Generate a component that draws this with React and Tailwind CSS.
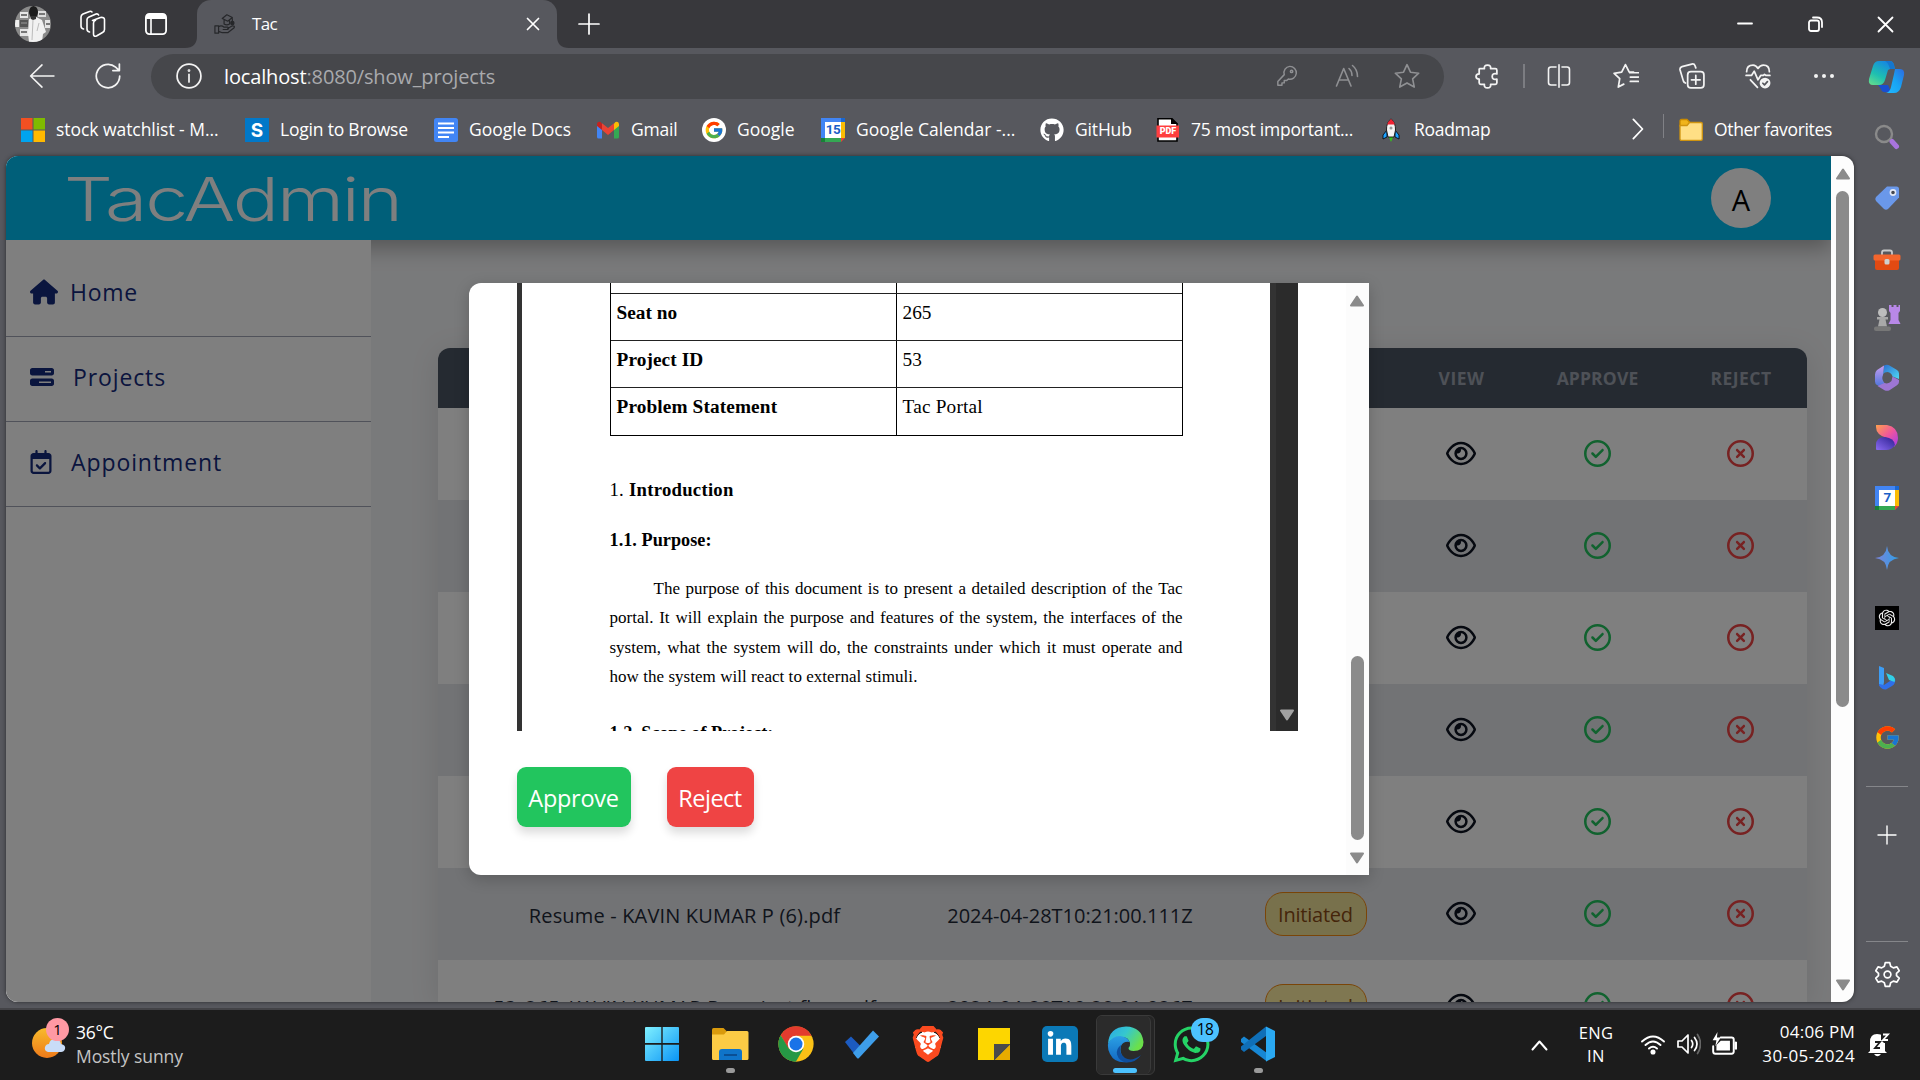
import React, { useLayoutEffect, useRef, useState } from "react";
import {
  FaHouse,
  FaBarsProgress,
  FaRegCalendarCheck,
  FaRegEye,
  FaRegCircleCheck,
  FaRegCircleXmark,
  FaGithub,
  FaWhatsapp,
  FaBrave,
  FaLinkedinIn,
} from "react-icons/fa6";
import { FcGoogle } from "react-icons/fc";
import { RiOpenaiFill } from "react-icons/ri";

/* Single-line text whose letter spacing is tuned to fill a given width. */
function Fit({ w, className = "", children }) {
  const ref = useRef(null);
  const [spacing, setSpacing] = useState(0);
  useLayoutEffect(() => {
    const el = ref.current;
    el.style.letterSpacing = "0px";
    const natural = el.offsetWidth;
    const count = el.textContent.length;
    setSpacing((w - natural) / count);
  }, [w]);
  return (
    <span
      ref={ref}
      className={"inline-block whitespace-pre " + className}
      style={{ letterSpacing: spacing + "px" }}
    >
      {children}
    </span>
  );
}

function Line({ size = 24, sw = 1.6, box = 24, className = "", children }) {
  return (
    <svg
      width={size}
      height={size}
      viewBox={`0 0 ${box} ${box}`}
      fill="none"
      stroke="currentColor"
      strokeWidth={sw}
      strokeLinecap="round"
      strokeLinejoin="round"
      className={"shrink-0 " + className}
    >
      {children}
    </svg>
  );
}

function Cell({ className = "", children }) {
  return <div className={"flex shrink-0 items-center justify-center " + className}>{children}</div>;
}

function Triangle({ down, className = "" }) {
  return (
    <svg width="16" height="12" viewBox="0 0 16 12" className={"shrink-0 " + className}>
      <path
        d={down ? "M2 1.5h12L8 10.5z" : "M2 10.5h12L8 1.5z"}
        fill="currentColor"
        stroke="currentColor"
        strokeWidth="2"
        strokeLinejoin="round"
      />
    </svg>
  );
}

/* ---------- Browser chrome ---------- */

function ProfilePhoto() {
  return (
    <svg width="36" height="36" viewBox="0 0 36 36">
      <clipPath id="photo">
        <circle cx="18" cy="18" r="18" />
      </clipPath>
      <g clipPath="url(#photo)">
        <rect width="36" height="36" fill="#8a8a8a" />
        <rect x="5" y="6" width="8" height="6" fill="#e8e8e8" />
        <rect x="5" y="14" width="8" height="7" fill="#555" />
        <rect x="5" y="23" width="9" height="7" fill="#e4e4e4" />
        <rect x="0" y="14" width="4" height="7" fill="#eee" />
        <rect x="23" y="5" width="8" height="6" fill="#ddd" />
        <rect x="30" y="14" width="5" height="8" fill="#e5e5e5" />
        <path d="M6 9h6M6 17h6M6 26h6M24 8h6M31 18h4" stroke="#777" strokeWidth="2" />
        <path d="M14 13l7-2 6 3 4 12-3 2-1 8H14l-1-9z" fill="#f1f1f1" />
        <path d="M18 14l-1 20M24 17l-2 8" stroke="#bbb" strokeWidth="1" />
        <ellipse cx="18.500" cy="6" rx="4.500" ry="6" fill="#1d1d1d" />
        <path d="M16 10h5v3l-3 1-2-1z" fill="#333" />
      </g>
    </svg>
  );
}

function TabStrip() {
  return (
    <div className="flex h-12 items-center bg-[#38383c] text-white">
      <Cell className="w-[66px]">
        <ProfilePhoto />
      </Cell>
      <Cell className="w-[54px]">
        <Line size={28} box={28} sw={1.600}>
          <path d="M13 9.500l8-3q4-.5 4 2v10q0 2-2 3l-6 3.500q-3 1-3-2V12q0-2 2-2.800z" transform="translate(.5 1)" />
          <path d="M10.500 22q-2.500-.5-2.500-3V9.500q0-1.500 2-2.500l7-3q2-.4 2.600 1" />
          <path d="M4.500 19Q2 18.500 2 16V7q0-2 2-3l6.500-2.600q1.500-.4 2.500.6" />
        </Line>
      </Cell>
      <Cell className="w-[72px]">
        <svg width="24" height="24" viewBox="0 0 24 24" fill="none">
          <rect x="1.900" y="1.900" width="20.200" height="20.200" rx="3.500" stroke="#fff" strokeWidth="1.800" />
          <path d="M2 7V5q0-3 3-3h14q3 0 3 3v2z" fill="#fff" />
          <path d="M7 7v15" stroke="#fff" strokeWidth="1.600" />
        </svg>
      </Cell>
      <div className="relative ml-[5px] flex h-12 w-[360px] items-center rounded-t-[14px] bg-[#57585e]">
        <svg width="12" height="12" className="absolute -left-3 bottom-0" viewBox="0 0 12 12">
          <path d="M12 0v12H0Q12 12 12 0z" fill="#57585e" />
        </svg>
        <svg width="12" height="12" className="absolute -right-3 bottom-0" viewBox="0 0 12 12">
          <path d="M0 0v12h12Q0 12 0 0z" fill="#57585e" />
        </svg>
        <Cell className="w-[55px] text-[#26272a]">
          <Line size={22} sw={1.300}>
            <path d="M1 14h4v8H1zM5 15q3-2 6 .5h4q2 1 0 2.500h-5M15 17l5-3q3 0 2 2l-7 5.500H9L5 20" />
            <path d="M9 6l5-4 6 3-5 4zM11 8v4q3 2 6 0V8M20 6v3" />
            <circle cx="20" cy="11" r="1.800" fill="currentColor" />
          </Line>
        </Cell>
        <Fit w={25} className="text-[17px]">Tac</Fit>
        <div className="flex-1" />
        <Cell className="w-12">
          <Line size={14} box={14} sw={1.700}>
            <path d="M1.500 1.500l11 11M12.500 1.500l-11 11" />
          </Line>
        </Cell>
      </div>
      <Cell className="w-[64px]">
        <Line size={22} box={22} sw={1.700}>
          <path d="M11 1v20M1 11h20" />
        </Line>
      </Cell>
      <div className="flex-1" />
      <Cell className="w-[70px]">
        <Line size={16} box={16} sw={1.800}>
          <path d="M1 7.500h14" />
        </Line>
      </Cell>
      <Cell className="w-[70px]">
        <Line size={17} box={17} sw={1.800}>
          <rect x="2" y="4.500" width="10" height="10.500" rx="2" />
          <path d="M6 1.500h4q5 0 5 5V11" />
        </Line>
      </Cell>
      <Cell className="w-[70px]">
        <Line size={17} box={17} sw={1.800}>
          <path d="M1.500 1.500l14 14M15.500 1.500l-14 14" />
        </Line>
      </Cell>
    </div>
  );
}

function Copilot() {
  return (
    <svg width="38" height="34" viewBox="0 0 38 34">
      <defs>
        <linearGradient id="cpa" x1="0" y1="1" x2=".6" y2="0">
          <stop offset="0" stopColor="#6be08a" />
          <stop offset=".45" stopColor="#1ec0b0" />
          <stop offset="1" stopColor="#1689e0" />
        </linearGradient>
        <linearGradient id="cpb" x1="0" y1="1" x2="1" y2="0">
          <stop offset="0" stopColor="#22b9ff" />
          <stop offset=".5" stopColor="#18a4f4" />
          <stop offset="1" stopColor="#2d6ae0" />
        </linearGradient>
      </defs>
      <path d="M10 25h10l3 7h-4q-5 1-6-3z" fill="#1a4fd0" />
      <path d="M11 1h11q3 0 4 4l1 4h-5l-2 1-3 10q-1.500 5-6 5H5q-5 0-4-6L5 6q1.500-5 6-5z" fill="url(#cpa)" />
      <path d="M17 1h5q3 0 4 4l1 4h-5q-2-7-5-8z" fill="#1577cf" />
      <path d="M27 9h5q5 0 4 6l-3 12q-2 6-7 6h-8q4-1 5-6l3-13q1-5 1-5z" fill="url(#cpb)" />
    </svg>
  );
}

function Toolbar() {
  return (
    <div className="flex h-14 items-center bg-[#57585e] text-[#f3f3f3]">
      <Cell className="w-[84px]">
        <Line size={26} sw={1.500}>
          <path d="M23 12H1.500M12 1.800L1.500 12 12 22.200" />
        </Line>
      </Cell>
      <Cell className="w-[47px]">
        <Line size={26} sw={1.600}>
          <path d="M22.800 12A10.800 10.800 0 1 1 19 3.800l3 2.700M22.500 1v6h-6" />
        </Line>
      </Cell>
      <div className="ml-5 flex h-[45px] w-[1293px] items-center rounded-full bg-[#46474b] pr-[7px]">
        <Cell className="w-[73px] pl-0.5">
          <Line size={26} sw={1.600}>
            <circle cx="12" cy="12" r="11" />
            <path d="M12 10.500v7" />
            <circle cx="12" cy="7" r=".5" />
          </Line>
        </Cell>
        <Fit w={271} className="pt-px text-[20px] text-[#a9aaad]">
          <span className="text-white">localhost</span>:8080/show_projects
        </Fit>
        <div className="flex-1" />
        <Cell className="w-[60px] text-[#8f9093]">
          <Line size={22} sw={1.600}>
            <path d="M15 1.500a7 7 0 1 1-1.500 13.800L11.500 17H9v2.500H6.500V22H2v-4l7-7.500A7 7 0 0 1 15 1.500z" />
            <circle cx="17" cy="7" r="1.300" />
          </Line>
        </Cell>
        <Cell className="w-[60px] text-[#8f9093]">
          <Line size={24} sw={1.600}>
            <path d="M1.500 22L8.700 4.500 16 22M4 16h9.500" />
            <path d="M14 4.500q3 2.500 3 7M17.500 1.500q5 4 5 11" />
          </Line>
        </Cell>
        <Cell className="w-[60px] text-[#8f9093]">
          <Line size={26} sw={1.500}>
            <path d="M12 1.500l3.200 7 7.600.9-5.600 5.200 1.500 7.600L12 18.400l-6.700 3.800 1.500-7.600L1.200 9.400l7.600-.9z" />
          </Line>
        </Cell>
      </div>
      <Cell className="ml-[15px] w-14">
        <Line size={25} sw={1.700}>
          <path d="M4.500 4.500H9Q8.500 1 12 1t3 3.500h4.500q1.500 0 1.500 1.500v3.500q-4.500-1-4.500 2.500t4.500 2.500V18q0 1.500-1.500 1.500H15q.5 3.500-3 3.500t-3-3.500H5.500Q4 19.500 4 18v-3.500q-3-.2-3-2.500t3-2.500V5z" />
        </Line>
      </Cell>
      <div className="ml-2 h-6 w-0.5 bg-[#7c7d82]" />
      <Cell className="w-[68px]">
        <Line size={24} sw={1.600}>
          <path d="M9 3H4Q1.500 3 1.500 5.500v13Q1.500 21 4 21h5M15 3h5q2.500 0 2.500 2.500v13Q22.500 21 20 21h-5M12 .8v22.400" />
        </Line>
      </Cell>
      <Cell className="w-[66px]">
        <Line size={26} sw={1.600}>
          <path d="M19 8.500h-4L11.500 1.500 8 8.500 1 9.500l5.200 5-1.300 7.700 5-2.700M16 13h7.500M16 17h7.500M15.500 9h8" />
        </Line>
      </Cell>
      <Cell className="w-[66px]">
        <Line size={26} sw={1.600}>
          <rect x="8" y="8" width="15" height="15" rx="3" />
          <path d="M15.500 11.500v8M11.500 15.500h8M6 18.500q-1.500-.5-2-2L1 6.500Q.5 4 2.800 3.300l9-2.300q2.300-.5 3 1.500l.7 2" />
        </Line>
      </Cell>
      <Cell className="w-[66px]">
        <Line size={26} sw={1.600}>
          <path d="M1.500 8q0-6 6-6Q10 2 12 5q2-3 5-3 5.500 0 5.500 6M1 11.500h5l2.500-4 3.500 8 2.500-4H17l1-1 1.200 1H23M5 15.500l6.500 7" />
          <circle cx="18.500" cy="18.500" r="5" fill="currentColor" stroke="none" />
          <path d="M16.500 18.700l1.500 1.500 2.700-3" stroke="#57585e" />
        </Line>
      </Cell>
      <Cell className="w-[66px]">
        <svg width="22" height="6" viewBox="0 0 22 6" fill="#f3f3f3">
          <circle cx="3" cy="3" r="2" />
          <circle cx="11" cy="3" r="2" />
          <circle cx="19" cy="3" r="2" />
        </svg>
      </Cell>
      <Cell className="w-[60px] pt-0.5">
        <Copilot />
      </Cell>
    </div>
  );
}

function MicrosoftLogo() {
  return (
    <svg width="24" height="24" viewBox="0 0 24 24">
      <path d="M0 0h11.500v11.500H0z" fill="#f25022" />
      <path d="M12.500 0H24v11.500H12.500z" fill="#7fba00" />
      <path d="M0 12.500h11.500V24H0z" fill="#00a4ef" />
      <path d="M12.500 12.500H24V24H12.500z" fill="#ffb900" />
    </svg>
  );
}

function SLogo() {
  return (
    <div className="flex h-6 w-6 items-center justify-center bg-[#0178c8] font-['Inter'] text-[19px] font-bold leading-none text-white">
      S
    </div>
  );
}

function DocsLogo() {
  return (
    <svg width="24" height="24" viewBox="0 0 24 24">
      <rect width="24" height="24" rx="2.500" fill="#4285f4" />
      <path d="M4 5.500h16M4 10h16M4 14.500h16M4 19h11" stroke="#fff" strokeWidth="2.200" />
    </svg>
  );
}

function GmailLogo() {
  return (
    <svg width="24" height="18" viewBox="0 0 24 18">
      <path d="M1 3v13q0 1.500 1.500 1.500H6V8z" fill="#4285f4" />
      <path d="M23 3v13q0 1.500-1.500 1.500H18V8z" fill="#34a853" />
      <path d="M18 2.500V9l5-4V3q-.5-3-3.500-2z" fill="#fbbc04" />
      <path d="M6 2.500V9L1 5V3q.5-3 3.500-2z" fill="#c5221f" />
      <path d="M6 2.300l6 4.700 6-4.700V9l-6 5-6-5z" fill="#ea4335" />
    </svg>
  );
}

function CalendarLogo({ day }) {
  return (
    <div className="relative flex h-6 w-6 items-center justify-center">
      <svg width="24" height="24" viewBox="0 0 24 24" className="absolute inset-0">
        <path d="M0 0h20v4H4v16H0z" fill="#4285f4" />
        <path d="M20 0h4v4h-4z" fill="#1967d2" />
        <path d="M20 4h4v16h-4z" fill="#fbbc04" />
        <path d="M4 20h16v4H4z" fill="#34a853" />
        <path d="M0 20h4v4H0z" fill="#188038" />
        <path d="M20 20h4l-4 4z" fill="#ea4335" />
        <path d="M4 4h16v16H4z" fill="#fff" />
      </svg>
      <span className="relative font-['Roboto'] text-[13.500px] font-bold leading-none tracking-[-0.5px] text-[#1a5fc8]">{day}</span>
    </div>
  );
}

function PdfLogo() {
  return (
    <div className="relative flex h-6 w-6 items-center justify-center">
      <svg width="24" height="24" viewBox="0 0 24 24" className="absolute inset-0">
        <path d="M2 .8h14l5 5V23H2z" fill="#fff" stroke="#000" strokeWidth="1.600" />
        <path d="M15 0l7 6h-7z" fill="#000" />
        <path d="M.5 7.500h22.500v12H.5z" fill="#ff3e3e" />
      </svg>
      <span className="relative pt-[3px] font-['Roboto'] text-[9px] font-black leading-none text-white">PDF</span>
    </div>
  );
}

function RocketLogo() {
  return (
    <svg width="24" height="24" viewBox="0 0 24 24">
      <path d="M8 12l-4 5v4l4-2zM16 12l4 5v4l-4-2z" fill="#1da1ff" stroke="#000" strokeWidth=".8" />
      <path d="M9.500 18.500h5L12 24z" fill="#35c21c" />
      <path d="M12 .8Q16.800 5 16.500 12l-1.500 7H9l-1.500-7Q7.200 5 12 .8z" fill="#f3f3f3" stroke="#111" strokeWidth=".9" />
      <path d="M12 1q2.800 2.300 3.800 5.500H8.200Q9.200 3.300 12 1z" fill="#f02233" />
      <circle cx="12" cy="10" r="1.500" fill="#999" />
    </svg>
  );
}

function GoogleRound() {
  return (
    <div className="flex h-6 w-6 items-center justify-center rounded-full bg-white">
      <FcGoogle size={20} />
    </div>
  );
}

const bookmarks = [
  { label: "stock watchlist - M...", w: 163, cell: "w-[224px]", icon: <MicrosoftLogo /> },
  { label: "Login to Browse", w: 128, cell: "w-[189px]", icon: <SLogo /> },
  { label: "Google Docs", w: 102, cell: "w-[162px]", icon: <DocsLogo /> },
  { label: "Gmail", w: 46, cell: "w-[106px]", icon: <GmailLogo /> },
  { label: "Google", w: 58, cell: "w-[119px]", icon: <GoogleRound /> },
  { label: "Google Calendar -...", w: 159, cell: "w-[219px]", icon: <CalendarLogo day="15" /> },
  { label: "GitHub", w: 57, cell: "w-[116px]", icon: <FaGithub size={24} color="#fff" /> },
  { label: "75 most important...", w: 162, cell: "w-[223px]", icon: <PdfLogo /> },
  { label: "Roadmap", w: 76, cell: "w-[246px]", icon: <RocketLogo /> },
];

function Bookmarks() {
  return (
    <div className="flex h-[52px] items-center pl-[21px] text-[17.500px] text-white">
      {bookmarks.map((b) => (
        <div key={b.label} className={"flex shrink-0 items-center gap-[11px] " + b.cell}>
          {b.icon}
          <Fit w={b.w} className="pb-[3px] leading-6">{b.label}</Fit>
        </div>
      ))}
      <Cell className="w-6 pb-0.5">
        <Line size={22} sw={1.900}>
          <path d="M8 1.500L18 12 8 22.500" />
        </Line>
      </Cell>
      <div className="mb-2 ml-[14px] h-6 w-px bg-[#808186]" />
      <svg width="24" height="24" viewBox="0 0 24 24" className="mb-px ml-[15px] shrink-0">
        <path d="M1 3q0-1.500 1.500-1.500H8L10.500 4v4H1z" fill="#f0b41c" stroke="#c98a00" strokeWidth="1.300" />
        <path d="M1 7.500h7L10.500 4.500H22q1.300 0 1.300 1.300V21q0 1.300-1.300 1.300H2.300Q1 22.300 1 21z" fill="#ffdf85" stroke="#cf9410" strokeWidth="1.300" />
      </svg>
      <Fit w={118} className="ml-[11px] pb-[3px] leading-6">Other favorites</Fit>
    </div>
  );
}

/* ---------- Edge side panel ---------- */

function SideRail() {
  return (
    <div className="flex w-[66px] shrink-0 flex-col items-center pt-[3px] text-white">
      <Cell className="h-[60px]">
        <svg width="26" height="26" viewBox="0 0 26 26" fill="none">
          <circle cx="10" cy="10" r="8" stroke="#8a8a8a" strokeWidth="2.400" />
          <path d="M18 17.500l4.500 5" stroke="#a874dd" strokeWidth="5" strokeLinecap="round" />
        </svg>
      </Cell>
      <Cell className="h-[60px] pt-0.5">
        <svg width="26" height="26" viewBox="0 0 26 26">
          <path d="M13 1.500h9.500q2.500 0 2.500 2.500v8.500L14 24q-2 1.500-4 0L2 16q-1.500-2 0-4z" fill="#6a98ea" />
          <circle cx="19" cy="7.500" r="2.600" fill="#45484f" stroke="#e3e9f5" strokeWidth="1.600" />
        </svg>
      </Cell>
      <Cell className="h-[60px] pt-1.5">
        <svg width="28" height="22" viewBox="0 0 28 22">
          <path d="M9 6V3.500Q9 1.500 11 1.500h6q2 0 2 2V6" stroke="#c9c9c9" strokeWidth="1.800" fill="none" />
          <path d="M2 9h24v10q0 2-2 2H4q-2 0-2-2z" fill="#e24a12" />
          <rect x="0.500" y="5.500" width="27" height="6" rx="1.500" fill="#f4652c" />
          <rect x="11.500" y="10" width="5" height="5.500" rx="1.500" fill="#cfcfcf" />
        </svg>
      </Cell>
      <Cell className="h-[60px] pt-0.5">
        <svg width="28" height="28" viewBox="0 0 28 28">
          <path d="M16 1h2.500v2h2V1h3v2h2V1H27v6l-1.500 2v7l2 4H15.500l2-4V9L16 7z" fill="#b888e8" />
          <circle cx="9.500" cy="8.500" r="4.500" fill="#bdbdbd" />
          <path d="M4 13h11v2.500h-2.500l1.500 7H5l1.500-7H4z" fill="#a8a8a8" />
          <rect x="1" y="22.500" width="17" height="4.500" rx="2" fill="#777" />
        </svg>
      </Cell>
      <Cell className="h-[60px] pt-0.5">
        <svg width="26" height="28" viewBox="0 0 26 28">
          <defs>
            <linearGradient id="ma" x1="0" y1="0" x2="1" y2="1">
              <stop offset="0" stopColor="#2b6fd0" />
              <stop offset="1" stopColor="#4fd8f5" />
            </linearGradient>
            <linearGradient id="mb" x1="0" y1="0" x2="0" y2="1">
              <stop offset="0" stopColor="#c79df0" />
              <stop offset="1" stopColor="#3a6fd8" />
            </linearGradient>
          </defs>
          <path d="M10 1.500q3-1.300 5.500 0L23 6q2 1.200 2 3.500V15l-6.500-2.500q-1-4-5-4.500-3 0-4.500 2z" fill="url(#ma)" />
          <path d="M10 1.500L9 11q-2 4 1.500 8L12 26 3 21q-2-1.200-2-3.500v-7Q1 8 3 6z" fill="url(#mb)" />
          <path d="M10.500 19q4 1.500 7-2l1-4.500L25 16v2q0 2-2 3.300l-7.500 4.900q-2.500 1.300-5 0L3.500 22z" fill="#9d76d4" />
        </svg>
      </Cell>
      <Cell className="h-[60px]">
        <svg width="26" height="28" viewBox="0 0 26 28">
          <defs>
            <linearGradient id="dsa" x1="0" y1="0" x2="1" y2="1">
              <stop offset="0" stopColor="#ffa04d" />
              <stop offset=".5" stopColor="#f0569c" />
              <stop offset="1" stopColor="#a339ee" />
            </linearGradient>
            <linearGradient id="dsb" x1="0" y1="1" x2="1" y2="0">
              <stop offset="0" stopColor="#8b6bf2" />
              <stop offset="1" stopColor="#2a1e8e" />
            </linearGradient>
          </defs>
          <path d="M2 2h11q11 2 11 13 0 5-4 9-1-7-7-9Q2 12 2 4z" fill="url(#dsa)" />
          <path d="M2 26V22q0-8 9-8 9 1 10 8-3 5-9 5H3q-1 0-1-1z" fill="url(#dsb)" />
        </svg>
      </Cell>
      <Cell className="h-[60px] pt-0.5">
        <CalendarLogo day="7" />
      </Cell>
      <Cell className="h-[60px] pt-0.5">
        <svg width="24" height="24" viewBox="0 0 24 24">
          <defs>
            <linearGradient id="gem" x1="0" y1="0" x2="1" y2="0">
              <stop offset="0" stopColor="#7c83d8" />
              <stop offset="1" stopColor="#2f9fe8" />
            </linearGradient>
          </defs>
          <path d="M12 0q1 11 12 12-11 1-12 12Q11 13 0 12 11 11 12 0z" fill="url(#gem)" />
        </svg>
      </Cell>
      <Cell className="h-[60px] pt-0.5">
        <div className="flex h-6 w-6 items-center justify-center bg-black">
          <RiOpenaiFill size={20} color="#eee" />
        </div>
      </Cell>
      <Cell className="h-[60px] pt-0.5">
        <svg width="24" height="26" viewBox="0 0 24 26">
          <path d="M4 1l5 2v14l-1 5-4-3z" fill="#3d9df5" />
          <path d="M4 19l5 1 6-4 5-3q1 6-3 8l-6 3.500q-4 .5-7-4z" fill="#2f6fe8" />
          <path d="M11 8l7 3q3 3 1.500 6L14 15z" fill="#33cfe6" />
        </svg>
      </Cell>
      <Cell className="h-[60px] pt-px">
        <FcGoogle size={27} />
      </Cell>
      <div className="mt-[19px] h-px w-[42px] bg-[#85868a]" />
      <Cell className="h-[97px]">
        <Line size={20} box={20} sw={1.400}>
          <path d="M10 1v18M1 10h18" />
        </Line>
      </Cell>
      <div className="mt-[57px] h-px w-[42px] bg-[#85868a]" />
      <Cell className="h-[67px]">
        <Line size={27} sw={1.500}>
          <path d="M10 1.500h4l.8 3.200 2.400 1.400 3.200-.9 2 3.500L20 11v2l2.400 2.300-2 3.500-3.200-.9-2.400 1.400-.8 3.200h-4l-.8-3.200-2.400-1.400-3.200.9-2-3.500L4 13v-2L1.600 8.700l2-3.500 3.200.9 2.400-1.400z" />
          <circle cx="12" cy="12" r="3" />
        </Line>
      </Cell>
    </div>
  );
}

/* ---------- Web page ---------- */

function SiteHeader() {
  return (
    <div className="relative z-10 flex h-[84px] shrink-0 items-center justify-between bg-[#00bef2] pl-[58px] pr-[60px] shadow-[0_8px_20px_rgba(0,0,0,0.3)]">
      <div className="origin-left scale-x-[1.28]">
        <Fit w={263} className="pt-0.5 font-['Inter'] text-[60px] font-light leading-[84px] text-white">TacAdmin</Fit>
      </div>
      <div className="flex h-[60px] w-[60px] items-center justify-center rounded-full bg-white pt-0.5 text-[29px] leading-none text-black">A</div>
    </div>
  );
}

function SiteNav() {
  const row = "flex h-[85px] items-center border-b border-[#a0a4b4] pb-1";
  return (
    <div className="relative z-20 w-[365px] shrink-0 bg-white pl-0 pt-3 text-[23px] text-[#142a7c]">
      <div className={row}>
        <div className="flex w-[64px] pl-6"><FaHouse size={26} className="w-[28px]" /></div>
        <Fit w={68}>Home</Fit>
      </div>
      <div className={row}>
        <div className="flex w-[67px] pl-6"><FaBarsProgress size={24} /></div>
        <Fit w={93}>Projects</Fit>
      </div>
      <div className={row}>
        <div className="flex w-[65px] pl-[23px]"><FaRegCalendarCheck size={24} /></div>
        <Fit w={151}>Appointment</Fit>
      </div>
    </div>
  );
}

const rows = [
  {},
  {},
  {},
  {},
  {},
  { name: "Resume - KAVIN KUMAR P (6).pdf", nameW: 312, date: "2024-04-28T10:21:00.111Z" },
  { name: "53_265_KAVIN KUMAR P_project flow.pdf", nameW: 383, date: "2024-04-28T10:28:01.026Z" },
];

const columns = "grid grid-cols-[493px_278px_213px_79px_193px_94px_19px]";

function ProjectsTable() {
  return (
    <div className="ml-[67px] mt-[108px] w-[1369px] rounded-t-[12px] shadow-[0_4px_30px_rgba(0,0,0,0.1)]">
      <div className={columns + " h-[60px] items-center justify-items-center rounded-t-[12px] bg-[#4b5563] text-[17.500px] font-bold text-[#9ca3af]"}>
        <span />
        <span />
        <span />
        <Fit w={46}>VIEW</Fit>
        <Fit w={82}>APPROVE</Fit>
        <Fit w={61}>REJECT</Fit>
      </div>
      {rows.map((r, i) => (
        <div key={i} className={columns + " h-[92px] items-center justify-items-center odd:bg-[#e5e7eb] even:bg-white text-[20px] text-[#1f2937]"}>
          <div>{r.name && <Fit w={r.nameW} className="pt-1">{r.name}</Fit>}</div>
          <div>{r.date && <Fit w={246} className="pt-1">{r.date}</Fit>}</div>
          <div>
            {r.name && (
              <div className="flex h-11 w-[102px] items-center justify-center rounded-[18px] border border-[#f58a10] bg-[#fde047]/50 pt-0.5 text-[#8a4b14]">
                <Fit w={75}>Initiated</Fit>
              </div>
            )}
          </div>
          <FaRegEye size={27} className="mb-0.5 mr-px w-[30px] text-[#0c1220]" />
          <FaRegCircleCheck size={27} className="mb-0.5 text-[#22c55e]" />
          <FaRegCircleXmark size={27} className="mb-0.5 mr-px text-[#ef4444]" />
        </div>
      ))}
    </div>
  );
}

function DocRow({ label, value, labelW, valueW }) {
  return (
    <div className="flex h-[47.200px] border-t border-[#222] text-[19.300px] leading-6">
      <div className="w-[286px] border-r border-black pl-[6px] pt-[7px]">
        <Fit w={labelW} className="font-bold">{label}</Fit>
      </div>
      <div className="pl-[6px] pt-[7px]">
        <Fit w={valueW}>{value}</Fit>
      </div>
    </div>
  );
}

function DocumentPreview() {
  const line = "h-[29.350px] text-justify [text-align-last:justify] whitespace-nowrap";
  return (
    <div className="flex h-[448px] w-[781px] overflow-hidden bg-white">
      <div className="w-[5px] bg-[#333]" />
      <div className="w-[748px] pl-[88px] font-['Liberation_Serif',serif] text-black">
        <div className="w-[573px]">
          <div className="border-x border-b border-black">
            <div className="h-[10px]">
              <div className="h-full w-[286px] border-r border-black" />
            </div>
            <DocRow label="Seat no" value="265" labelW={61} valueW={29} />
            <DocRow label="Project ID" value="53" labelW={87} valueW={19} />
            <DocRow label="Problem Statement" value="Tac Portal" labelW={161} valueW={80} />
          </div>
          <div className="mt-[39px] h-[30px] text-[18.700px] leading-[30px]">
            <Fit w={124}>1. <b>Introduction</b></Fit>
          </div>
          <div className="mt-5 h-[30px] text-[18.200px] font-bold leading-[30px]">
            <Fit w={102.500}>1.1. Purpose:</Fit>
          </div>
          <div className="mt-[19.500px] text-[17px] leading-[29.350px]">
            <div className={line + " pl-11"}>The purpose of this document is to present a detailed description of the Tac</div>
            <div className={line}>portal. It will explain the purpose and features of the system, the interfaces of the</div>
            <div className={line}>system, what the system will do, the constraints under which it must operate and</div>
            <div className="h-[29.350px] whitespace-nowrap"><Fit w={308}>how the system will react to external stimuli.</Fit></div>
          </div>
          <div className="mt-[27px] h-[30px] text-[18.200px] font-bold leading-[30px]">
            <Fit w={164}>1.2. Scope of Project:</Fit>
          </div>
        </div>
      </div>
      <div className="flex w-[28px] flex-col items-end justify-end border-l-[6px] border-[#333] bg-[#2b2b2b] pb-[10px] pr-[3px] text-[#a2a2a2]">
        <Triangle down />
      </div>
    </div>
  );
}

function ReviewModal() {
  const button = "flex h-[60px] items-center justify-center rounded-[9px] pt-[3px] text-[23.500px] text-white shadow-[0_6px_10px_rgba(0,0,0,0.14)]";
  return (
    <div className="flex h-[592px] w-[900px] overflow-hidden rounded-l-[12px] bg-white shadow-[0_4px_16px_rgba(0,0,0,0.2)]">
      <div className="flex-1 pl-12">
        <DocumentPreview />
        <div className="mt-9 flex gap-9">
          <div className={button + " w-[114px] bg-[#22c55e]"}><Fit w={90}>Approve</Fit></div>
          <div className={button + " w-[87px] bg-[#ef4444]"}><Fit w={63}>Reject</Fit></div>
        </div>
      </div>
      <div className="flex w-[23px] flex-col items-center bg-[#fcfcfc] pb-[11px] pt-3 text-[#8b8b8b]">
        <Triangle />
        <div className="flex-1" />
        <div className="h-[184px] w-[13px] rounded-full bg-[#8b8b8b]" />
        <Triangle down className="mt-3" />
      </div>
    </div>
  );
}

function WebView() {
  return (
    <div className="ml-[6px] flex h-[846px] w-[1848px] overflow-hidden rounded-[12px] shadow-[0_0_4px_rgba(0,0,0,0.5)]">
      <div className="relative flex h-full w-[1825px] flex-col overflow-hidden bg-[#f3f4f6]">
        <SiteHeader />
        <div className="flex h-[762px]">
          <SiteNav />
          <ProjectsTable />
        </div>
        <div className="absolute inset-0 z-30 flex items-center justify-center bg-black/50">
          <ReviewModal />
        </div>
      </div>
      <div className="flex w-[23px] flex-col items-center bg-[#fdfdfd] pb-[11px] pt-3 text-[#8b8b8b]">
        <Triangle />
        <div className="mt-[11px] h-[516px] w-[13px] rounded-full bg-[#8b8b8b]" />
        <div className="flex-1" />
        <Triangle down />
      </div>
    </div>
  );
}

/* ---------- Taskbar ---------- */

function Weather() {
  return (
    <div className="flex items-center">
      <div className="relative ml-8 h-[70px] w-[44px]">
        <svg width="44" height="70" viewBox="0 0 44 70">
          <defs>
            <linearGradient id="sun" x1="0" y1="0" x2="0" y2="1">
              <stop offset="0" stopColor="#f8bb2c" />
              <stop offset="1" stopColor="#ee7a1a" />
            </linearGradient>
          </defs>
          <circle cx="15" cy="33" r="15" fill="url(#sun)" />
          <path d="M16 42q-4-1-3-5 1-3 4-3 1-5 6-5 5 0 6 5 5 1 4 5-1 3-4 3z" fill="#c9dcf8" />
        </svg>
        <div className="absolute left-[14px] top-[8px] flex h-[23px] w-[23px] items-center justify-center rounded-full bg-[#ff99a4] text-[15px] leading-none text-black">1</div>
      </div>
      <div className="flex flex-col items-start pb-0.5 text-[17.500px] leading-6">
        <Fit w={38} className="text-white">36°C</Fit>
        <Fit w={107} className="text-[#c4c4c4]">Mostly sunny</Fit>
      </div>
    </div>
  );
}

function StartIcon() {
  return (
    <svg width="36" height="36" viewBox="0 0 36 36">
      <defs>
        <linearGradient id="win" x1="0" y1="0" x2="1" y2="1">
          <stop offset="0" stopColor="#7ff0ff" />
          <stop offset="1" stopColor="#0a94f5" />
        </linearGradient>
      </defs>
      <path d="M2 1h15.300v16H1V2q0-1 1-1zM18.700 1H34q1 0 1 1v15H18.700zM1 18.700h16.300V35H2q-1 0-1-1zM18.700 18.700H35V34q0 1-1 1H18.700z" fill="url(#win)" />
    </svg>
  );
}

function ExplorerIcon() {
  return (
    <svg width="38" height="34" viewBox="0 0 38 34">
      <path d="M1 2.500Q1 1 2.500 1h10L16 4.500V10H1z" fill="#d99a0c" />
      <path d="M1 7.500h12L16 4h20q1.500 0 1.500 1.500v26q0 1.500-1.500 1.500H2.500Q1 33 1 31.500z" fill="#fccb45" />
      <path d="M8 33v-8q0-3 3-3h17q3 0 3 3v8z" fill="#0f74c9" />
      <path d="M13 28h13" stroke="#0a4f94" strokeWidth="2" />
    </svg>
  );
}

function ChromeIcon() {
  return (
    <svg width="36" height="36" viewBox="0 0 48 48">
      <circle cx="24" cy="24" r="23.500" fill="#fbc116" />
      <path d="M3.600 12.300A23.500 23.500 0 0 1 44.400 12.300L44.300 13H24L13.500 30z" fill="#e33b2e" />
      <path d="M3.600 12.300A23.500 23.500 0 0 0 23.800 47.500L34 30 24 35 14 29.500z" fill="#269845" />
      <circle cx="24" cy="24" r="11" fill="#fff" />
      <circle cx="24" cy="24" r="8.700" fill="#1a73e8" />
    </svg>
  );
}

function TodoIcon() {
  return (
    <svg width="36" height="32" viewBox="0 0 36 32">
      <path d="M1 14l6-5.500 11 11-5 10z" fill="#1c5bc0" />
      <path d="M29 2.500l6 6-20 21.500q-1 1-2 0l-4-5z" fill="#3e9eea" />
    </svg>
  );
}

function NotesIcon() {
  return (
    <svg width="34" height="34" viewBox="0 0 34 34">
      <path d="M1 1h32v32H1z" fill="#fdd600" />
      <path d="M17 17h16v1L18 33h-1z" fill="#4b4b4b" />
      <path d="M33 18v15H18z" fill="#e8ab00" />
    </svg>
  );
}

function EdgeIcon() {
  return (
    <svg width="37" height="37" viewBox="0 0 37 37">
      <defs>
        <linearGradient id="ea" x1="0" y1="0" x2="1" y2=".5">
          <stop offset="0" stopColor="#2aa7e6" />
          <stop offset=".5" stopColor="#35c7cf" />
          <stop offset="1" stopColor="#6be04a" />
        </linearGradient>
        <linearGradient id="eb" x1="0" y1="0" x2="0" y2="1">
          <stop offset="0" stopColor="#2ba0e4" />
          <stop offset="1" stopColor="#1268c4" />
        </linearGradient>
      </defs>
      <path d="M1 18Q2 1 19 .5 35 1 36.500 16q0 9-10 9-5 0-5-3 2-2 1.500-5-1.500-6-8-6Q5 11 1 18z" fill="url(#ea)" />
      <path d="M1 18q4-8 12-8 8 1 9.500 6-6-1-8.500 4-2 8 4 13l3 3Q8 38 3 28q-2.500-4-2-10z" fill="url(#eb)" />
      <path d="M14 19q-3 8 4 13 7 4 16-3-5 7.500-14 7.500-8-1-10-8-1-6 4-9.500z" fill="#0f4f9e" />
    </svg>
  );
}

function VsCodeIcon() {
  return (
    <svg width="36" height="36" viewBox="0 0 36 36">
      <path d="M1 13l3-2.500L27 27v8.500L1 16z" fill="#1787d4" />
      <path d="M1 20.500L26 .5V10L4 26l-3-2.500z" fill="#0f6fb8" />
      <path d="M26 .5l9 4.500v26l-9 4.500z" fill="#2aa9f2" />
    </svg>
  );
}

function Taskbar() {
  return (
    <div className="flex h-[70px] items-center bg-[#1c1c1c] text-white">
      <div className="w-[629px]">
        <Weather />
      </div>
      <Cell className="w-[66px] pb-0.5"><StartIcon /></Cell>
      <Cell className="relative h-[70px] w-[70px] pb-0.5">
        <ExplorerIcon />
        <span className="absolute bottom-[7px] h-[5px] w-[9px] rounded-full bg-[#9a9a9a]" />
      </Cell>
      <Cell className="w-[62px] pb-0.5"><ChromeIcon /></Cell>
      <Cell className="w-[70px] pb-0.5"><TodoIcon /></Cell>
      <Cell className="w-[62px] pb-0.5"><FaBrave size={36} color="#fb4a1f" className="rounded-xl bg-[radial-gradient(circle,#fff_50%,transparent_52%)]" /></Cell>
      <Cell className="w-[69px] pb-0.5"><NotesIcon /></Cell>
      <Cell className="w-[63px] pb-0.5">
        <div className="flex h-9 w-9 items-center justify-center rounded-[5px] bg-[#0b79b7]"><FaLinkedinIn size={27} /></div>
      </Cell>
      <div className="relative ml-[5px] flex h-[60px] w-[59px] rounded-[6px] border border-[#3a3a3a] bg-[#252525]">
        <div className="relative flex h-full w-[54px] items-center justify-center rounded-[6px] border-r border-[#3a3a3a] bg-[#2b2b2b] pb-0.5 pl-[3px]">
          <EdgeIcon />
          <span className="absolute bottom-[1px] h-[5px] w-6 rounded-full bg-[#4cc2ff]" />
        </div>
      </div>
      <Cell className="relative h-[70px] w-[70px] pb-0.5 pl-[3px]">
        <FaWhatsapp size={41} color="#25d366" />
        <span className="absolute right-[6px] top-[8px] flex h-6 w-7 items-center justify-center rounded-full bg-[#4cc2ff] text-[15.500px] leading-none tracking-[-0.5px] text-black">18</span>
      </Cell>
      <Cell className="relative h-[70px] w-[66px] pb-0.5">
        <VsCodeIcon />
        <span className="absolute bottom-[7px] h-[5px] w-[9px] rounded-full bg-[#9a9a9a]" />
      </Cell>
      <div className="flex-1" />
      <Cell className="w-10">
        <Line size={17} box={17} sw={2}>
          <path d="M1.500 12.500l7-8 7 8" />
        </Line>
      </Cell>
      <div className="flex w-[74px] flex-col items-center pb-[3px] text-[16.500px] leading-[23px]">
        <Fit w={35}>ENG</Fit>
        <Fit w={18}>IN</Fit>
      </div>
      <Cell className="ml-0.5 w-9 pb-0.5">
        <Line size={24} sw={1.900}>
          <path d="M1 9.500q11-10 22 0M4.500 13q7.500-7 15 0M8 16.500q4-3.500 8 0" />
          <circle cx="12" cy="20" r="1.600" fill="currentColor" />
        </Line>
      </Cell>
      <Cell className="w-[35px] pb-0.5">
        <Line size={24} sw={1.700}>
          <path d="M1 9h4l6-6v18l-6-6H1z" />
          <path d="M14.500 8.500q2.500 3.500 0 7M17.500 5.500q5 6.500 0 13" />
          <path d="M20.500 2.500q6 9.500 0 19" stroke="#666" />
        </Line>
      </Cell>
      <Cell className="w-9 pb-0.5">
        <Line size={26} sw={1.800}>
          <path d="M9 6h10q2 0 2 2v11q0 2-2 2H4q-2 0-2-2v-5" />
          <path d="M9 9h8.500v9H5v-5z" fill="currentColor" stroke="none" />
          <path d="M23 11v5" strokeWidth="2.500" />
          <path d="M6 1L1.500 8.500H5L4 14l5-8H5.500z" fill="currentColor" stroke="none" />
        </Line>
      </Cell>
      <div className="flex w-[113px] flex-col items-end pb-[3px] text-[17px] leading-[24px]">
        <Fit w={75}>04:06 PM</Fit>
        <Fit w={93}>30-05-2024</Fit>
      </div>
      <Cell className="mr-[18px] w-[47px] pb-px">
        <svg width="24" height="26" viewBox="0 0 24 26">
          <path d="M3 19V10q0-8 7-8 8 0 8 8v9l2 2H1zM7 22h7q-3.500 4.500-7 0z" fill="#fff" />
          <path d="M8 10h5l-5 6h5" stroke="#1c1c1c" strokeWidth="1.800" fill="none" />
          <path d="M14 0h9v11h-6l-3-3z" fill="#1c1c1c" />
          <path d="M16 2.500h5l-5 5.500h5" stroke="#fff" strokeWidth="1.800" fill="none" />
        </svg>
      </Cell>
    </div>
  );
}

export default function App() {
  return (
    <div className="flex h-[1080px] w-[1920px] flex-col overflow-hidden bg-[#57585e] font-['Open_Sans','Noto_Sans',sans-serif]">
      <TabStrip />
      <Toolbar />
      <div className="flex h-[904px]">
        <div className="w-[1854px] shrink-0">
          <Bookmarks />
          <WebView />
        </div>
        <SideRail />
      </div>
      <div className="h-0.5 bg-[#434347]" />
      <Taskbar />
    </div>
  );
}
